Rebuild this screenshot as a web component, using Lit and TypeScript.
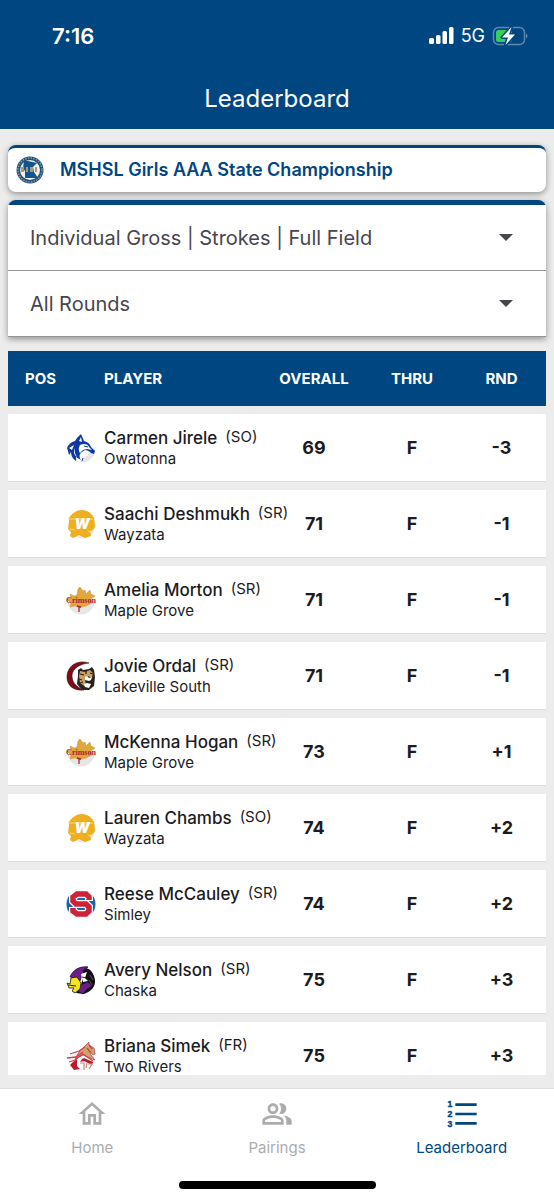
import { LitElement, html, css, svg, nothing } from "lit";
import { customElement, property, state } from "lit/decorators.js";
import { classMap } from "lit/directives/class-map.js";

type Team = "owatonna" | "wayzata" | "maplegrove" | "lakeville" | "simley" | "chaska" | "tworivers";

interface Player {
  name: string;
  grade: string;
  school: string;
  team: Team;
  overall: string;
  thru: string;
  rnd: string;
}

const PLAYERS: Player[] = [
  { name: "Carmen Jirele", grade: "SO", school: "Owatonna", team: "owatonna", overall: "69", thru: "F", rnd: "-3" },
  { name: "Saachi Deshmukh", grade: "SR", school: "Wayzata", team: "wayzata", overall: "71", thru: "F", rnd: "-1" },
  { name: "Amelia Morton", grade: "SR", school: "Maple Grove", team: "maplegrove", overall: "71", thru: "F", rnd: "-1" },
  { name: "Jovie Ordal", grade: "SR", school: "Lakeville South", team: "lakeville", overall: "71", thru: "F", rnd: "-1" },
  { name: "McKenna Hogan", grade: "SR", school: "Maple Grove", team: "maplegrove", overall: "73", thru: "F", rnd: "+1" },
  { name: "Lauren Chambs", grade: "SO", school: "Wayzata", team: "wayzata", overall: "74", thru: "F", rnd: "+2" },
  { name: "Reese McCauley", grade: "SR", school: "Simley", team: "simley", overall: "74", thru: "F", rnd: "+2" },
  { name: "Avery Nelson", grade: "SR", school: "Chaska", team: "chaska", overall: "75", thru: "F", rnd: "+3" },
  { name: "Briana Simek", grade: "FR", school: "Two Rivers", team: "tworivers", overall: "75", thru: "F", rnd: "+3" },
];

const LOGOS: Record<Team, unknown> = {
  owatonna: svg`
    <circle cx="16" cy="16" r="13.500" fill="#e6e6ea"/>
    <path fill="#fff" d="M0 0h30v14l-3 3-8 7-6 5L2 17z"/>
    <path fill="#0b3aa6" d="M1 15c1-3 4-6 8-7l2-3 4-4 3 7c4 1 6 3 7 6l4 4-1 3-3-1c-2-2-4-3-6-3l-3 2c-3 2-3 5-1 8l-5-3v4c-3-2-5-5-5-9l-2 3-1-4z"/>
    <path fill="#fff" d="M13 8l2-4 1 5zM3 15l5-3-2 5zM14 12c4-2 8-1 9 2l3 3-5-1-4 1-3 3c-2-3-1-6 0-8zM9 15c-1 3 0 6 2 9-3-2-4-6-2-9z"/>
    <path fill="none" stroke="#0b3aa6" d="M18 13l4 1M16 28l1-3"/>`,
  wayzata: svg`
    <circle cx="16" cy="16" r="13.500" fill="#ebe9e8"/>
    <path fill="#edb01c" d="M3 9C6 4 11 1 16 1c6 0 10 4 12 8l1 8c-1 4-3 5-5 5l1 5-6 2-6-3-6 3-3-2 1-4-3-3 1-7z"/>
    <path fill="none" stroke="#f8d98e" d="M2 10h25M4 20l5 1M22 23l3-1"/>
    <text x="16" y="20" text-anchor="middle" font-family="Inter, sans-serif" font-size="14" font-weight="900" font-style="italic" fill="#fff">W</text>`,
  maplegrove: svg`
    <circle cx="15" cy="16" r="13.500" fill="#e6e6e7"/>
    <path fill="#fff" d="M0 0h30v17L15 23 0 17z"/>
    <path fill="#e0a73c" stroke="#d28a35" stroke-width=".5" d="M14 2l3 4 2-1 1 4 4-4 1 4 4 2-4 3 1 4-6 3-4 1-2 1-5-2-5 1 1-4-4-4 4-1-1-4 4 2 3-1 1-6z"/>
    <path fill="none" stroke="#a72b35" stroke-width="1.300" d="M13 21v6M11 21l4 1"/>
    <text x="15" y="18" text-anchor="middle" font-family="Liberation Serif, serif" font-size="8" font-weight="700" fill="#a51e35">Crimson</text>`,
  lakeville: svg`
    <path fill="#7a0d17" stroke="#3f1010" stroke-width=".6" d="M23 2C10-2 1 6 1 16c0 9 7 14 17 13C8 25 6 20 6 14 7 7 14 3 23 2z"/>
    <path fill="#29231f" d="M12 9l3-2 2 2 6-1 3-2 2 3 1 7-1 9-5 4h-7l-5-6 1-8z"/>
    <path fill="#c8a164" d="M14 10l5 1 5-2 3 3-1 5-4-2-3 3 1 8-6-4-1-7z"/>
    <path fill="#fff" d="M19 16l2-1 2 2 3-1-1 3-2 1-4-1zM18 23l3-1 4 1-2 4-4-1z"/>
    <path fill="none" stroke="#2a211b" stroke-width="1.200" d="M14 13l4 1M13 18l3 1M14 22l3-1M24 12l3 1M20 10v3"/>`,
  simley: svg`
    <circle cx="15" cy="15" r="14.500" fill="#1765ab"/>
    <path fill="#fff" d="M4 5l6-5h10l6 5-2 3H6zM26 25l-6 5H10l-6-5 2-3h18z"/>
    <path fill="none" stroke="#fff" stroke-width="8" d="M23 12V8l-3-3h-9L7 8v4l3 3h10l3 3v4l-3 3h-9l-4-3v-4"/>
    <path fill="none" stroke="#cf2138" stroke-width="5.500" d="M23 11V8l-3-3h-9L7 8v4l3 3h10l3 3v4l-3 3h-9l-4-3v-3"/>`,
  chaska: svg`
    <path fill="#111015" d="M17 3c7-1 11 5 12 12s-5 12-11 14l-8-1 5-8 2-8z"/>
    <path fill="#6d1d8d" stroke="#211126" stroke-width=".8" d="M4 12C7 5 13 1 22 2l-5 4-3 10-4-3zM14 20l8-3 4 4-5 3-4 5-5-3z"/>
    <path fill="#f5e51e" stroke="#141414" stroke-width=".8" d="M5 13l6-1 4 6-1 6-5 4-3-2 2-3H3l-2-5 3 1z"/>
    <path fill="#fff" d="M15 9l6-2-2 6 3 3-5 1z"/>
    <path stroke="#222" d="M2 20l8 1M16 12l4 1"/>
    <path stroke="#777" stroke-width=".7" d="M24 10l3 5M23 15l3 5"/>`,
  tworivers: svg`
    <path fill="#caa66b" stroke="#ba3340" stroke-width=".7" d="M13 11l8-8 2-2v3l5 3 1 6-2 1-3-4 1 4 4 5-5-2-7-3-8 4z"/>
    <path fill="none" stroke="#cf3f4d" stroke-width="1.300" d="M4 13l9-3 6-4M1 17l9-1 7-5M3 21l6-2 8-6 10 7M21 7l3 4M23 4l3 4"/>
    <path fill="#bd1830" d="M7 21l4-3v7l3 3-6 1-4-5zM18 17l9 4-1 3-8-4-4 1 2-3z"/>
    <path fill="none" stroke="#c98a72" stroke-width="1.200" d="M14 22h4v7M21 22l-1 5M22 23h4l-3 5"/>`,
};

@customElement("team-logo")
export class TeamLogo extends LitElement {
  @property() team: Team = "owatonna";

  static styles = css`
    :host { display: block; }
    .logo { display: block; width: 30px; height: 30px; }
  `;

  render() {
    return html`<svg class="logo" viewBox="0 0 30 30" aria-hidden="true">${LOGOS[this.team]}</svg>`;
  }
}

@customElement("status-bar")
export class StatusBar extends LitElement {
  static styles = css`
    :host {
      display: flex;
      align-items: center;
      justify-content: space-between;
      height: 68px;
      padding: 4px 26px 0 52px;
      box-sizing: border-box;
      color: #fff;
    }
    .time { font-size: 22px; font-weight: 600; line-height: 28px; }
    .signals { display: flex; align-items: center; gap: 7px; font-size: 18px; line-height: 24px; }
    .icon { display: block; }
  `;

  render() {
    return html`
      <span class="time">7:16</span>
      <div class="signals">
        <svg class="icon" width="25" height="18" viewBox="0 0 25 18" fill="#fff" aria-hidden="true">
          <rect x="0" y="11" width="5" height="6" rx="1.500"/>
          <rect x="7" y="8" width="4.500" height="9" rx="1.500"/>
          <rect x="13.500" y="4" width="4.500" height="13" rx="1.500"/>
          <rect x="20" y="0" width="4.500" height="17" rx="1.500"/>
        </svg>
        <span>5G</span>
        <svg class="icon" width="36" height="22" viewBox="0 0 36 22" aria-hidden="true">
          <rect x="1.500" y="2.500" width="31" height="17" rx="5" fill="none" stroke="#5f88b0" stroke-width="1.500"/>
          <path d="M34 8.500c2 1 2 4 0 5z" fill="#5f88b0"/>
          <rect x="4" y="5" width="16" height="12" rx="2.500" fill="#33cf5a"/>
          <path d="M19.500 2L10 12.500h6L13.500 20 23 9.500h-6z" fill="#fff" stroke="#004680" stroke-width="3" stroke-linejoin="round" paint-order="stroke"/>
        </svg>
      </div>
    `;
  }
}

@customElement("filter-select")
export class FilterSelect extends LitElement {
  @property() label = "";
  @property() value = "";

  static styles = css`
    :host { display: block; border-bottom: 1px solid #949397; }
    .field { display: grid; align-items: center; }
    .select {
      grid-area: 1 / 1;
      width: 100%;
      height: 65px;
      padding: 0 64px 0 22px;
      border: 0;
      border-radius: 0;
      appearance: none;
      background: #fff;
      color: #49454f;
      font: inherit;
      font-size: 20px;
    }
    .caret {
      grid-area: 1 / 1;
      justify-self: end;
      margin-right: 33px;
      pointer-events: none;
    }
  `;

  render() {
    return html`
      <div class="field">
        <select class="select" aria-label=${this.label}>
          <option>${this.value}</option>
        </select>
        <svg class="caret" width="14" height="7" viewBox="0 0 14 7" aria-hidden="true">
          <path d="M0 0h14L7 7z" fill="#49454f"/>
        </svg>
      </div>
    `;
  }
}

@customElement("leader-table")
export class LeaderTable extends LitElement {
  @property({ attribute: false }) players: Player[] = [];

  static styles = css`
    :host { display: block; }
    .table { width: 100%; table-layout: fixed; border-collapse: separate; border-spacing: 0; color: #1c1b1f; }
    .col-pos { width: 58px; }
    .col-logo { width: 38px; }
    .col-score { width: 98px; }
    .col-round { width: 85px; }
    .head {
      height: 55px;
      padding: 0;
      background: #004680;
      color: #fff;
      font-size: 15px;
      font-weight: 700;
      text-align: center;
    }
    .head.pos { padding-left: 17px; text-align: left; }
    .head.player { text-align: left; }
    .cell {
      height: 67px;
      padding: 0;
      border-top: 8px solid #ececed;
      border-bottom: 1px solid #dcdcde;
      background: #fff;
      font-size: 18px;
      font-weight: 700;
      text-align: center;
    }
    .cell.player { text-align: left; font-size: 17px; font-weight: 500; white-space: nowrap; }
    .cell.round, .head.round { padding-right: 4px; }
    .name { display: flex; gap: 8px; line-height: 22px; }
    .grade { font-size: 15px; font-weight: 400; line-height: 20px; }
    .school { font-size: 15px; font-weight: 400; line-height: 20px; }
  `;

  render() {
    return html`
      <table class="table">
        <colgroup>
          <col class="col-pos" /><col class="col-logo" /><col />
          <col class="col-score" /><col class="col-score" /><col class="col-round" />
        </colgroup>
        <thead>
          <tr>
            <th class="head pos" colspan="2" scope="col">POS</th>
            <th class="head player" scope="col">PLAYER</th>
            <th class="head" scope="col">OVERALL</th>
            <th class="head" scope="col">THRU</th>
            <th class="head round" scope="col">RND</th>
          </tr>
        </thead>
        <tbody>
          ${this.players.map(
            (p) => html`
              <tr>
                <td class="cell"></td>
                <td class="cell"><team-logo team=${p.team}></team-logo></td>
                <td class="cell player">
                  <div class="name"><span>${p.name}</span><span class="grade">(${p.grade})</span></div>
                  <div class="school">${p.school}</div>
                </td>
                <td class="cell">${p.overall}</td>
                <td class="cell">${p.thru}</td>
                <td class="cell round">${p.rnd}</td>
              </tr>
            `,
          )}
        </tbody>
      </table>
    `;
  }
}

const TAB_ICONS: Record<string, unknown> = {
  Home: svg`<path d="M12 5.690l5 4.500V18h-2v-6H9v6H7v-7.810l5-4.500M12 3L2 12h3v8h6v-6h2v6h6v-8h3L12 3z"/>`,
  Pairings: svg`
    <path d="M16.670 13.130C18.040 14.060 19 15.320 19 17v3h4v-3c0-2.180-3.570-3.470-6.330-3.870z"/>
    <path d="M15 12c2.210 0 4-1.790 4-4s-1.790-4-4-4c-.47 0-.91.1-1.330.24C14.500 5.270 15 6.580 15 8s-.5 2.730-1.330 3.760c.42.14.86.24 1.330.24z"/>
    <path d="M9 12c2.210 0 4-1.790 4-4s-1.790-4-4-4-4 1.790-4 4 1.790 4 4 4zm0-6c1.100 0 2 .9 2 2s-.9 2-2 2-2-.9-2-2 .9-2 2-2z"/>
    <path d="M9 13c-2.670 0-8 1.340-8 4v3h16v-3c0-2.660-5.330-4-8-4zm6 5H3v-.99C3.200 16.290 6.300 15 9 15s5.800 1.290 6 2v1z"/>`,
  Leaderboard: svg`
    <path d="M7 4h16v2H7zM7 11h16v2H7zM7 18h16v2H7z"/>
    <g font-family="Liberation Sans, sans-serif" font-size="6.500" font-weight="700" text-anchor="middle" stroke="currentColor" stroke-width=".3">
      <text x="3" y="7">1</text><text x="3" y="14.500">2</text><text x="3" y="22">3</text>
    </g>`,
};

@customElement("tab-bar")
export class TabBar extends LitElement {
  @state() private active = "Leaderboard";

  static styles = css`
    :host { display: block; background: #fff; border-top: 1px solid #dededf; }
    .tabs { display: grid; grid-template-columns: repeat(3, 1fr); }
    .tab {
      display: flex;
      flex-direction: column;
      align-items: center;
      gap: 8px;
      padding: 9px 0 0;
      border: 0;
      background: none;
      color: #acacae;
      font: inherit;
      font-size: 15px;
      line-height: 20px;
    }
    .tab.active { color: #004680; }
    .icon { width: 32px; height: 32px; fill: currentColor; }
    .indicator { width: 197px; height: 8px; margin: 23px auto 11px; border-radius: 4px; background: #000; }
  `;

  render() {
    return html`
      <nav class="tabs">
        ${Object.keys(TAB_ICONS).map(
          (name) => html`
            <button
              type="button"
              class=${classMap({ tab: true, active: name === this.active })}
              aria-current=${name === this.active ? "page" : nothing}
              @click=${() => (this.active = name)}
            >
              <svg class="icon" viewBox="0 0 24 24" aria-hidden="true">${TAB_ICONS[name]}</svg>
              <span>${name}</span>
            </button>
          `,
        )}
      </nav>
      <div class="indicator"></div>
    `;
  }
}

@customElement("app-root")
export class AppRoot extends LitElement {
  static styles = css`
    :host {
      display: flex;
      flex-direction: column;
      height: 100vh;
      background: #ececed;
      font-family: Inter, "Liberation Sans", sans-serif;
    }
    .top { background: #004680; color: #fff; }
    .title { margin: 0; padding: 16px 0 15px; font-size: 24px; font-weight: 400; line-height: 30px; text-align: center; }
    .main { display: flex; flex: 1; flex-direction: column; gap: 8px; min-height: 0; padding: 16px 8px 13px; }
    .card {
      background: #fff;
      border-top: 3px solid #004680;
      border-radius: 8px;
      box-shadow: 0 2px 6px rgba(0, 0, 0, 0.4);
    }
    .event { display: flex; align-items: center; gap: 16px; padding: 8px; }
    .event-name { margin: 0; color: #004680; font-size: 18px; font-weight: 600; line-height: 28px; }
    .seal { width: 28px; height: 28px; }
    .filters { border-top-width: 5px; border-radius: 8px 8px 0 0; }
    .results { flex: 1; min-height: 0; margin-top: 6px; overflow-y: auto; scrollbar-width: none; }
  `;

  render() {
    return html`
      <header class="top">
        <status-bar></status-bar>
        <h1 class="title">Leaderboard</h1>
      </header>
      <main class="main">
        <section class="card event">
          <svg class="seal" viewBox="0 0 28 28" aria-hidden="true">
            <circle cx="14" cy="14" r="13.500" fill="#1d4f7c"/>
            <circle cx="14" cy="14" r="12" fill="none" stroke="#8d9a9c" stroke-width="1.500" stroke-dasharray="1.500 1.200"/>
            <circle cx="14" cy="14" r="10" fill="#f1f1ea"/>
            <path d="M8 5h4l9 2-4 4 1 5 4 6H9v-7l-2-3z" fill="#12558c"/>
            <path d="M5 11h3v5H5zM10 11h2v5h-2zM14 11h3v5h-3zM19 11h2v5h-2z" fill="#a8997b"/>
          </svg>
          <h2 class="event-name">MSHSL Girls AAA State Championship</h2>
        </section>
        <section class="card filters">
          <filter-select label="Leaderboard view" value="Individual Gross | Strokes | Full Field"></filter-select>
          <filter-select label="Round" value="All Rounds"></filter-select>
        </section>
        <section class="results">
          <leader-table .players=${PLAYERS}></leader-table>
        </section>
      </main>
      <tab-bar></tab-bar>
    `;
  }
}
